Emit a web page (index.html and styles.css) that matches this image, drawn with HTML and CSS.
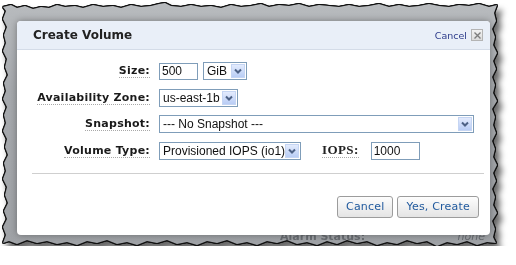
FILE: index.html
```html
<!DOCTYPE html>
<html lang="en">

<head>
    <meta charset="UTF-8">
    <title>Create Volume</title>
    <link rel="stylesheet" href="styles.css">
</head>

<body>

    <div class="sheet">
        <div class="torn">
            <div class="dialog">
                <div class="dialog-head">
                    <span class="dialog-title">Create Volume</span>
                    <a class="head-cancel">Cancel
                        <span class="close-box">
                            <svg width="7" height="7" viewBox="0 0 7 7">
                                <path d="M0.5 0.5 L6.5 6.5 M6.5 0.5 L0.5 6.5" stroke="#7d7d7d" stroke-width="1.4" />
                            </svg>
                        </span>
                    </a>
                </div>

                <div class="form">
                    <div class="field-label"><span>Size:</span></div>
                    <div class="controls">
                        <div class="text-input size-input">500</div>
                        <div class="select select-unit">GiB<span class="arrow"></span></div>
                    </div>

                    <div class="field-label"><span>Availability Zone:</span></div>
                    <div class="controls">
                        <div class="select select-zone">us-east-1b<span class="arrow"></span></div>
                    </div>

                    <div class="field-label"><span>Snapshot:</span></div>
                    <div class="controls">
                        <div class="select select-snap">--- No Snapshot ---<span class="arrow"></span></div>
                    </div>

                    <div class="field-label"><span>Volume Type:</span></div>
                    <div class="controls">
                        <div class="select select-type">Provisioned IOPS (io1)<span class="arrow"></span></div>
                        <span class="iops-label">IOPS:</span>
                        <div class="text-input iops-input">1000</div>
                    </div>
                </div>

                <div class="sep"></div>

                <div class="actions">
                    <button class="btn">Cancel</button>
                    <button class="btn">Yes, Create</button>
                </div>
            </div>

            <div class="ghost-row">
                <span class="ghost-label">Alarm Status:</span>
                <span class="ghost-value">none</span>
            </div>
        </div>
    </div>

</body>

</html>
```

FILE: styles.css
```css
body {
    margin: 0;
    background: #fff;
    font-family: "DejaVu Sans", Verdana, sans-serif;
}

.sheet {
    width: 494px;
    height: 243px;
    margin: 3px 0 0 3px;
    filter: drop-shadow(1px 0 0 #111) drop-shadow(-1px 0 0 #111) drop-shadow(0 1px 0 #111) drop-shadow(0 -1px 0 #111) drop-shadow(4px 6px 3px rgba(0, 0, 0, 0.6));
}

/* torn paper edge */
.torn {
    height: 100%;
    box-sizing: border-box;
    padding: 18px 0 0 14px;
    background: linear-gradient(#b8bbbe, #a6a9ad 35%, #9fa2a6);
    clip-path: polygon(0 4px, 8px 2px, 14px 5px, 22px 3px, 30px 6px, 38px 4px, 46px 5px, 54px 2px, 62px 4px, 72px 3px, 80px 5px, 90px 2px, 100px 4px, 110px 3px, 118px 5px, 128px 2px, 138px 4px, 148px 3px, 156px 1px, 162px 0, 168px 3px, 178px 4px, 188px 2px, 198px 4px, 208px 3px, 218px 5px, 228px 2px, 238px 4px, 248px 3px, 258px 1px, 266px 4px, 276px 2px, 286px 3px, 296px 1px, 306px 4px, 316px 2px, 326px 3px, 336px 4px, 346px 2px, 356px 4px, 366px 3px, 376px 1px, 386px 4px, 396px 2px, 406px 4px, 416px 3px, 426px 1px, 436px 3px, 446px 4px, 456px 2px, 466px 3px, 476px 1px, 486px 4px, 494px 2px,
            491px 10px, 493px 18px, 489px 26px, 492px 34px, 490px 42px, 494px 50px, 490px 58px, 493px 66px, 489px 74px, 492px 82px, 490px 90px, 494px 98px, 489px 106px, 492px 114px, 490px 122px, 493px 130px, 489px 138px, 492px 146px, 490px 154px, 494px 162px, 490px 170px, 493px 178px, 489px 186px, 492px 194px, 490px 202px, 494px 210px, 489px 218px, 492px 226px, 490px 234px, 493px 240px,
            484px 239px, 474px 242px, 464px 238px, 454px 241px, 444px 239px, 434px 243px, 424px 238px, 414px 240px, 404px 237px, 394px 241px, 384px 239px, 374px 242px, 364px 238px, 354px 240px, 344px 237px, 334px 241px, 324px 238px, 314px 242px, 304px 239px, 294px 241px, 284px 237px, 274px 240px, 264px 238px, 254px 242px, 244px 239px, 234px 241px, 224px 237px, 214px 240px, 204px 238px, 194px 242px, 184px 239px, 174px 241px, 164px 237px, 154px 240px, 144px 238px, 134px 242px, 124px 239px, 114px 241px, 104px 237px, 94px 240px, 84px 238px, 74px 242px, 64px 239px, 54px 241px, 44px 238px, 34px 240px, 24px 237px, 14px 241px, 6px 238px, 0 240px,
            3px 232px, 0 224px, 4px 216px, 1px 208px, 5px 200px, 2px 192px, 4px 184px, 0 176px, 3px 168px, 1px 160px, 5px 152px, 2px 144px, 4px 136px, 0 128px, 3px 120px, 1px 112px, 4px 104px, 0 96px, 3px 88px, 1px 80px, 5px 72px, 2px 64px, 4px 56px, 0 48px, 3px 40px, 1px 32px, 4px 24px, 0 16px, 3px 8px);
}

.dialog {
    position: relative;
    z-index: 1;
    width: 473px;
    height: 214px;
    box-sizing: border-box;
    background: #fff;
    border-radius: 4px;
    box-shadow: 0 0 7px rgba(0, 0, 0, 0.35);
    overflow: hidden;
}

.dialog-head {
    height: 29px;
    box-sizing: border-box;
    display: flex;
    align-items: center;
    padding: 0 7px 0 16px;
    background: #e9eff8;
    border-bottom: 1px solid #d4dce8;
}

.dialog-title {
    font-size: 12px;
    font-weight: bold;
    color: #222;
}

.head-cancel {
    margin-left: auto;
    display: flex;
    align-items: center;
    gap: 4px;
    font-size: 9.5px;
    color: #2b3a8a;
}

.close-box {
    width: 10px;
    height: 10px;
    display: flex;
    align-items: center;
    justify-content: center;
    border: 1px solid #b4b4b4;
    background: linear-gradient(#f2f2f2, #dcdcdc);
}

.form {
    display: grid;
    grid-template-columns: 133px auto;
    grid-auto-rows: 18px;
    column-gap: 9px;
    row-gap: 8.5px;
    padding-top: 12px;
}

.field-label {
    display: flex;
    justify-content: flex-end;
    align-items: center;
    font-size: 11px;
    font-weight: bold;
    letter-spacing: 0.25px;
    color: #1a1a1a;
}

.field-label span {
    line-height: 13px;
    border-bottom: 1px dotted #a8a8a8;
}

.controls {
    display: flex;
    align-items: center;
    gap: 5px;
}

.text-input,
.select {
    height: 17px;
    box-sizing: border-box;
    display: flex;
    align-items: center;
    flex-shrink: 0;
    white-space: nowrap;
    border: 1px solid #7f9db9;
    background: #fff;
    font-family: "Liberation Sans", Arial, sans-serif;
    font-size: 12px;
    color: #111;
}

.text-input {
    padding-left: 2px;
}

.select {
    height: 18px;
    padding-left: 3px;
    overflow: hidden;
}

.select .arrow {
    flex-shrink: 0;
    margin-left: auto;
    margin-right: 1px;
    width: 14px;
    height: 14px;
    box-sizing: border-box;
    border: 1px solid #c5d5f3;
    background-image: url("data:image/svg+xml;utf8,<svg xmlns='http://www.w3.org/2000/svg' width='12' height='12'><polyline points='3,4.5 6,7.5 9,4.5' fill='none' stroke='%234d6185' stroke-width='2'/></svg>"), linear-gradient(#e3ebfd, #b9cdf5);
}

.size-input {
    width: 39px;
}

.select-unit {
    width: 44px;
}

.select-zone {
    width: 79px;
}

.select-snap {
    width: 315px;
}

.select-type {
    width: 142px;
}

.iops-label {
    margin-left: 16px;
    font-family: "Liberation Serif", "Times New Roman", serif;
    font-size: 13px;
    font-weight: bold;
    letter-spacing: 0.4px;
    color: #222;
    line-height: 14px;
    border-bottom: 1px dotted #a8a8a8;
}

.iops-input {
    width: 49px;
    margin-left: 7px;
    height: 18px;
}

.sep {
    height: 1px;
    margin: 13px 6px 0 15px;
    background: #cfcfcf;
}

.actions {
    display: flex;
    justify-content: flex-end;
    gap: 4px;
    padding: 22px 11px 0 0;
}

.btn {
    height: 22px;
    padding: 0 8px;
    border: 1px solid #9c9c9c;
    border-radius: 3px;
    background: linear-gradient(#fdfdfd, #e4e4e4);
    font-family: "DejaVu Sans", Verdana, sans-serif;
    font-size: 11px;
    letter-spacing: 0.2px;
    color: #215a9e;
}

.ghost-row {
    display: flex;
    margin-top: -5px;
    font-size: 11px;
    color: #6a6e73;
}

.ghost-label {
    margin-left: 263px;
    font-weight: bold;
}

.ghost-value {
    margin-left: auto;
    margin-right: 12px;
    font-style: italic;
}
```
